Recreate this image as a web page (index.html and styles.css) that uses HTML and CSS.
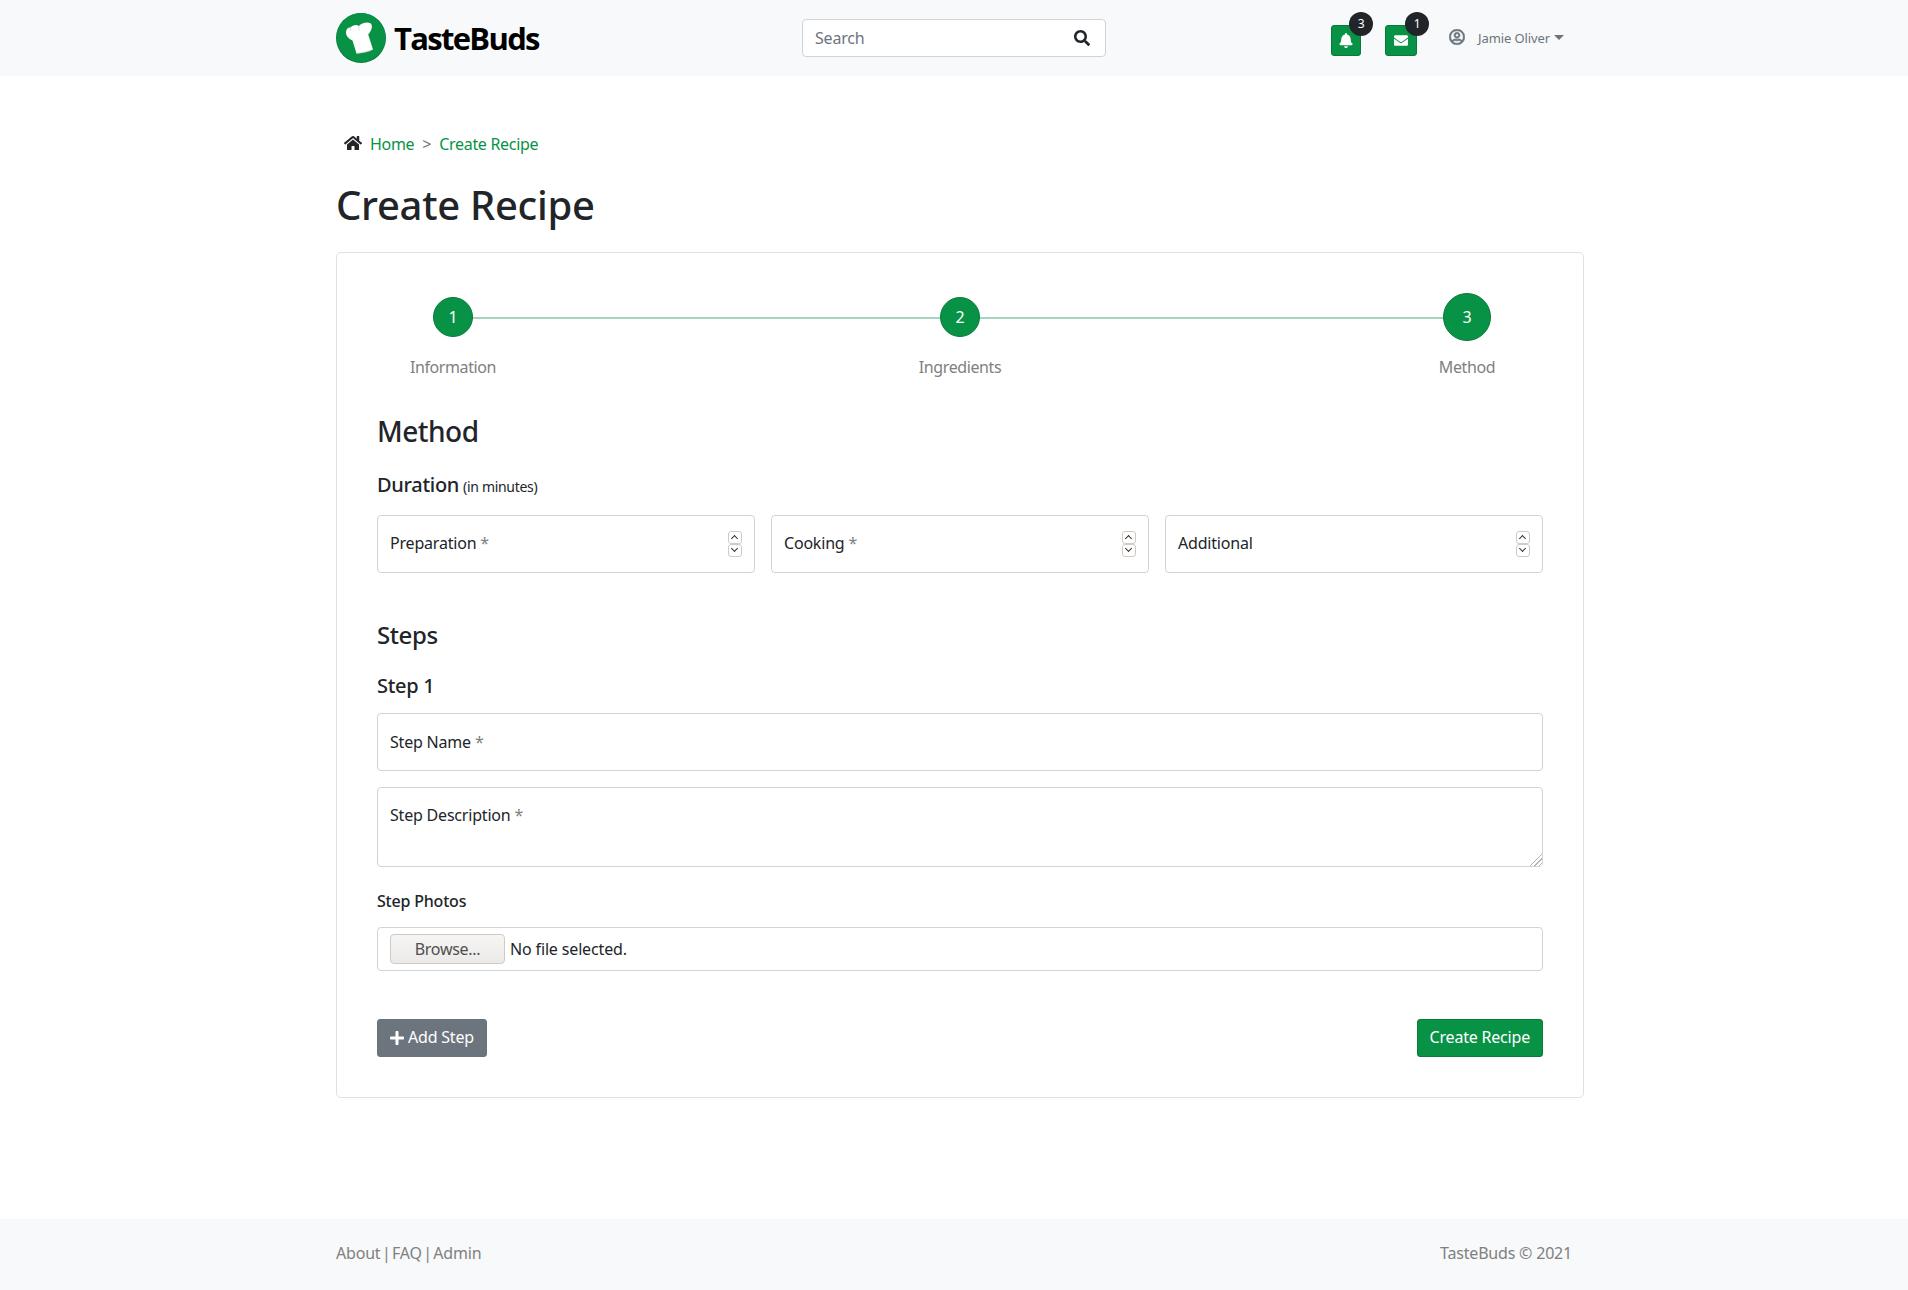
FILE: index.html
```html
<!DOCTYPE html>
<html lang="en">

<head>
    <meta charset="UTF-8">
    <meta name="viewport" content="width=device-width, initial-scale=1.0">
    <title>TasteBuds - Create Recipe</title>
    <link rel="stylesheet" href="styles.css">
</head>

<body>
    <nav class="navbar">
        <a class="brand" href="#">
            <svg class="brand-mark" viewBox="0 0 50 50">
                <circle cx="25" cy="25" r="25" fill="#067a3a" />
                <circle cx="25" cy="24.5" r="24.5" fill="#089246" />
                <path fill="#fff"
                    d="M10 19.500C10 16.500 11.800 14.500 14.500 14.600 16.500 12 20.500 11.300 23 13 25 10 31 8.500 34 10 37 11.800 36.500 16.500 32.200 21.500L37 36.500C32 39 26 40 20.500 40.500L16.500 27.500C12.500 25.500 10 23 10 19.500z" />
                <path fill="none" stroke="#cfcfcf" stroke-width=".8"
                    d="M20.500 40.300C26 39.800 32 38.800 36.800 36.400M23 13c-.5 1.500-.5 3 .5 4.500M14.500 14.600c-.2 1 0 2 .5 3" />
            </svg>
            <span class="brand-name">TasteBuds</span>
        </a>
        <form class="search">
            <input class="search-input" type="text" placeholder="Search">
            <svg class="search-icon" viewBox="0 0 512 512">
                <path
                    d="M505 442.700L405.300 343c-4.500-4.500-10.600-7-17-7H372c27.600-35.300 44-79.700 44-128C416 93.100 322.900 0 208 0S0 93.100 0 208s93.100 208 208 208c48.300 0 92.700-16.400 128-44v16.300c0 6.400 2.500 12.500 7 17l99.700 99.700c9.400 9.400 24.600 9.400 33.900 0l28.300-28.300c9.400-9.400 9.400-24.600.1-34zM208 336c-70.700 0-128-57.200-128-128 0-70.700 57.200-128 128-128 70.700 0 128 57.200 128 128 0 70.700-57.200 128-128 128z" />
            </svg>
        </form>
        <div class="nav-actions">
            <a class="nav-btn nav-btn-bell" href="#">
                <svg class="nav-btn-icon" viewBox="0 0 448 512">
                    <path
                        d="M224 512c35.320 0 63.970-28.650 63.970-64H160.030c0 35.350 28.650 64 63.970 64zm215.390-149.710c-19.320-20.760-55.470-51.990-55.470-154.290 0-77.700-54.480-139.900-127.940-155.160V32c0-17.670-14.320-32-31.980-32s-31.980 14.330-31.980 32v20.840C118.560 68.100 64.080 130.300 64.080 208c0 102.300-36.150 133.530-55.470 154.290-6 6.450-8.660 14.160-8.610 21.710.11 16.400 12.980 32 32.100 32h383.800c19.120 0 32-15.600 32.100-32 .05-7.550-2.610-15.270-8.610-21.710z" />
                </svg>
                <span class="badge">3</span>
            </a>
            <a class="nav-btn nav-btn-mail" href="#">
                <svg class="nav-btn-icon" viewBox="0 0 512 512">
                    <path
                        d="M502.300 190.800c3.900-3.100 9.700-.2 9.700 4.700V400c0 26.500-21.500 48-48 48H48c-26.500 0-48-21.500-48-48V195.600c0-5 5.700-7.800 9.700-4.700 22.400 17.400 52.100 39.500 154.100 113.600 21.100 15.400 56.700 47.800 92.200 47.600 35.700.3 72-32.800 92.300-47.600 102-74.100 131.600-96.300 154-113.700zM256 320c23.200.4 56.600-29.200 73.400-41.400 132.700-96.300 142.800-104.700 173.400-128.700 5.800-4.500 9.200-11.500 9.200-18.900v-19c0-26.500-21.500-48-48-48H48C21.500 64 0 85.500 0 112v19c0 7.400 3.400 14.300 9.200 18.900 30.600 23.900 40.700 32.400 173.400 128.700 16.800 12.200 50.200 41.800 73.400 41.400z" />
                </svg>
                <span class="badge">1</span>
            </a>
            <a class="user" href="#">
                <svg class="user-icon" viewBox="0 0 496 512">
                    <path
                        d="M248 104c-53 0-96 43-96 96s43 96 96 96 96-43 96-96-43-96-96-96zm0 144c-26.500 0-48-21.500-48-48s21.500-48 48-48 48 21.500 48 48-21.500 48-48 48zm0-240C111 8 0 119 0 256s111 248 248 248 248-111 248-248S385 8 248 8zm0 448c-49.700 0-95.100-18.300-130.100-48.400 14.900-23 40.400-38.600 69.600-39.500 20.800 6.400 40.600 9.600 60.500 9.600s39.700-3.100 60.500-9.600c29.200 1 54.700 16.500 69.600 39.500-35 30.100-80.400 48.400-130.100 48.400zm162.700-84.100c-24.400-31.400-62.100-51.900-105.100-51.900-10.200 0-26 9.600-57.600 9.600-31.500 0-47.400-9.600-57.600-9.600-42.900 0-80.600 20.500-105.100 51.900C61.900 339.200 48 299.200 48 256c0-110.300 89.700-200 200-200s200 89.700 200 200c0 43.200-13.900 83.200-37.300 115.900z" />
                </svg>
                <span class="user-name">Jamie Oliver</span>
                <span class="caret"></span>
            </a>
        </div>
    </nav>

    <main class="page">
        <div class="breadcrumb">
            <svg class="home-icon" viewBox="0 0 576 512">
                <path
                    d="M280.370 148.260L96 300.110V464a16 16 0 0 0 16 16l112.060-.29a16 16 0 0 0 15.920-16V368a16 16 0 0 1 16-16h64a16 16 0 0 1 16 16v95.640a16 16 0 0 0 16 16.050L464 480a16 16 0 0 0 16-16V300L295.670 148.260a12.190 12.190 0 0 0-15.300 0zM571.600 251.470L488 182.560V44.050a12 12 0 0 0-12-12h-56a12 12 0 0 0-12 12v72.610L318.470 43a48 48 0 0 0-61 0L4.340 251.470a12 12 0 0 0-1.600 16.900l25.500 31A12 12 0 0 0 45.150 301l235.220-193.740a12.190 12.190 0 0 1 15.300 0L530.900 301a12 12 0 0 0 16.900-1.600l25.500-31a12 12 0 0 0-1.700-16.930z" />
            </svg>
            <a href="#">Home</a>
            <span class="breadcrumb-sep">&gt;</span>
            <a href="#">Create Recipe</a>
        </div>
        <h1 class="page-title">Create Recipe</h1>

        <form class="card">
            <div class="stepper">
                <div class="step">
                    <span class="step-num">1</span>
                    <span class="step-label">Information</span>
                </div>
                <div class="step">
                    <span class="step-num">2</span>
                    <span class="step-label">Ingredients</span>
                </div>
                <div class="step step-active">
                    <span class="step-num">3</span>
                    <span class="step-label">Method</span>
                </div>
            </div>

            <h2 class="section-title">Method</h2>
            <h3 class="duration-title">Duration <small>(in minutes)</small></h3>
            <div class="duration-row">
                <div class="field">
                    <span class="field-label">Preparation <i>*</i></span>
                    <span class="spinner"><b class="spin-up"></b><b class="spin-down"></b></span>
                </div>
                <div class="field">
                    <span class="field-label">Cooking <i>*</i></span>
                    <span class="spinner"><b class="spin-up"></b><b class="spin-down"></b></span>
                </div>
                <div class="field">
                    <span class="field-label">Additional</span>
                    <span class="spinner"><b class="spin-up"></b><b class="spin-down"></b></span>
                </div>
            </div>

            <h3 class="steps-title">Steps</h3>
            <h4 class="step-title">Step 1</h4>
            <div class="field field-name">
                <span class="field-label">Step Name <i>*</i></span>
            </div>
            <div class="field-area">
                <textarea class="area-input"></textarea>
                <span class="area-label">Step Description <i>*</i></span>
                <span class="area-grip"></span>
            </div>
            <label class="photos-label">Step Photos</label>
            <div class="file-input">
                <button class="browse" type="button">Browse...</button>
                <span class="file-name">No file selected.</span>
            </div>

            <div class="form-actions">
                <button class="btn btn-grey" type="button">
                    <svg class="plus-icon" viewBox="0 0 448 512">
                        <path
                            d="M416 208H272V64c0-17.670-14.330-32-32-32h-32c-17.670 0-32 14.330-32 32v144H32c-17.670 0-32 14.330-32 32v32c0 17.670 14.330 32 32 32h144v144c0 17.670 14.330 32 32 32h32c17.670 0 32-14.330 32-32V304h144c17.670 0 32-14.330 32-32v-32c0-17.670-14.330-32-32-32z" />
                    </svg>
                    Add Step
                </button>
                <button class="btn btn-green" type="submit">Create Recipe</button>
            </div>
        </form>
    </main>

    <footer class="footer">
        <div class="footer-links"><a href="#">About</a> | <a href="#">FAQ</a> | <a href="#">Admin</a></div>
        <div>TasteBuds &copy; 2021</div>
    </footer>
</body>

</html>
```

FILE: styles.css
```css
* {
    box-sizing: border-box;
}

body {
    margin: 0;
    font-family: "Noto Sans", sans-serif;
    font-size: 16px;
    line-height: 24px;
    letter-spacing: -0.2px;
    color: #212529;
    background: #fff;
}

a {
    text-decoration: none;
    color: inherit;
}

h1,
h2,
h3,
h4 {
    margin: 0;
    font-weight: 500;
}

.navbar {
    display: flex;
    align-items: center;
    height: 76px;
    padding-left: 336px;
    background: #f8f9fa;
}

.brand {
    display: flex;
    align-items: center;
    width: 466px;
}

.brand-mark {
    width: 50px;
    height: 50px;
}

.brand-name {
    margin-left: 8px;
    font-family: "Open Sans", sans-serif;
    font-size: 31px;
    font-weight: 700;
    letter-spacing: -1.7px;
    color: #000;
}

.search {
    display: flex;
    align-items: center;
    width: 304px;
    height: 38px;
    padding: 0 15px 0 12px;
    background: #fff;
    border: 1px solid #ced4da;
    border-radius: 4px;
}

.search-input {
    flex: 1;
    min-width: 0;
    border: 0;
    outline: 0;
    padding: 0;
    font-family: inherit;
    font-size: 16px;
    letter-spacing: -0.2px;
    color: #212529;
}

.search-input::placeholder {
    color: #6c757d;
}

.search-icon {
    width: 16px;
    height: 16px;
    fill: #212529;
}

.nav-actions {
    display: flex;
    align-items: center;
    margin-left: 225px;
}

.nav-btn {
    position: relative;
    display: flex;
    align-items: center;
    justify-content: center;
    height: 31px;
    margin-top: 5px;
    background: #089246;
    border: 1px solid #087a3b;
    border-radius: 3px;
}

.nav-btn-bell {
    width: 30px;
    margin-right: 24px;
}

.nav-btn-mail {
    width: 32px;
    margin-right: 32px;
}

.nav-btn-icon {
    width: 14px;
    height: 15px;
    fill: #fff;
}

.badge {
    position: absolute;
    top: -14px;
    width: 24px;
    height: 24px;
    border-radius: 50%;
    background: #212529;
    color: #fff;
    font-size: 12px;
    line-height: 24px;
    text-align: center;
}

.nav-btn-bell .badge {
    right: -13px;
}

.nav-btn-mail .badge {
    right: -13px;
}

.user {
    display: flex;
    align-items: center;
    color: #6c757d;
}

.user-icon {
    width: 16px;
    height: 16px;
    margin-top: -2px;
    fill: #6c757d;
    stroke: #6c757d;
    stroke-width: 20;
}

.user-name {
    margin-left: 13px;
    font-size: 13px;
    letter-spacing: -0.1px;
}

.caret {
    width: 0;
    height: 0;
    margin-left: 4px;
    margin-top: -2px;
    border-top: 5px solid #6c757d;
    border-left: 5px solid transparent;
    border-right: 5px solid transparent;
}

.page {
    width: 1248px;
    margin: 56px 0 121px 336px;
}

.breadcrumb {
    display: flex;
    align-items: center;
    padding-left: 8px;
    letter-spacing: -0.3px;
    color: #089246;
}

.home-icon {
    width: 18px;
    height: 16px;
    margin-top: -2px;
    margin-right: 8px;
    fill: #212529;
}

.breadcrumb-sep {
    margin: 0 8px;
    color: #6c757d;
}

.page-title {
    margin-top: 25px;
    font-size: 40px;
    line-height: 48px;
    letter-spacing: -0.3px;
}

.card {
    margin-top: 23px;
    padding: 40px 40px 39.500px;
    border: 1px solid #dee2e6;
    border-radius: 5px;
}

.stepper {
    position: relative;
    display: flex;
    justify-content: space-between;
}

.stepper::before {
    content: "";
    position: absolute;
    left: 76px;
    right: 76px;
    top: 24px;
    height: 2px;
    background: #a5d6bd;
}

.step {
    position: relative;
    display: flex;
    flex-direction: column;
    align-items: center;
    width: 152px;
}

.step-num {
    display: flex;
    align-items: center;
    justify-content: center;
    width: 40px;
    height: 40px;
    margin: 4px 0;
    border-radius: 50%;
    background: #089246;
    border: 1px solid #087a3b;
    color: #fff;
}

.step-active .step-num {
    width: 48px;
    height: 48px;
    margin: 0;
}

.step-label {
    margin-top: 14px;
    letter-spacing: -0.4px;
    color: #808080;
}

.section-title {
    margin-top: 36px;
    padding-bottom: 2px;
    height: 34px;
    font-size: 28px;
    line-height: 32px;
    letter-spacing: -0.5px;
}

.duration-title {
    margin-top: 24px;
    font-size: 20px;
    line-height: 24px;
    letter-spacing: -0.3px;
}

.duration-title small {
    margin-left: -1px;
    font-size: 14px;
    font-weight: 400;
    line-height: 1;
    letter-spacing: -0.3px;
}

.duration-row {
    display: grid;
    grid-template-columns: repeat(3, 1fr);
    gap: 16px;
    margin-top: 18px;
}

.field {
    display: flex;
    align-items: center;
    justify-content: space-between;
    height: 58px;
    padding: 0 12px;
    border: 1px solid #ced4da;
    border-radius: 4px;
}

.duration-row .field-label {
    margin-bottom: 2px;
}

.field-label i,
.area-label i {
    font-style: normal;
    color: #808080;
}

.spinner {
    display: flex;
    flex-direction: column;
}

.spinner b {
    position: relative;
    display: block;
    width: 14px;
    height: 13px;
    background: #fff;
    border: 1px solid #cfcac4;
    border-radius: 3px;
}

.spinner b::after {
    content: "";
    position: absolute;
    left: 3px;
    width: 4px;
    height: 4px;
    border-left: 1.5px solid #333;
    border-top: 1.5px solid #333;
}

.spin-up::after {
    top: 4px;
    transform: rotate(45deg);
}

.spin-down::after {
    top: 1px;
    transform: rotate(225deg);
}

.steps-title {
    margin-top: 48px;
    height: 30px;
    font-size: 24px;
    line-height: 28px;
    letter-spacing: -0.4px;
}

.step-title {
    margin-top: 23px;
    font-size: 20px;
    line-height: 24px;
    letter-spacing: -0.3px;
}

.field-name {
    margin-top: 15px;
}

.field-area {
    position: relative;
    margin-top: 16px;
    height: 80px;
}

.area-input {
    display: block;
    width: 100%;
    height: 80px;
    border: 1px solid #ced4da;
    border-radius: 4px;
    outline: 0;
    resize: none;
}

.area-label {
    position: absolute;
    left: 13px;
    top: 16px;
}

.area-grip {
    position: absolute;
    right: 1px;
    bottom: 1px;
    width: 14px;
    height: 14px;
    background: repeating-linear-gradient(135deg, #fff 0 2px, #b5b5b5 2px 3px);
    clip-path: polygon(100% 0, 100% 100%, 0 100%);
}

.photos-label {
    display: block;
    margin-top: 22px;
    font-weight: 500;
    letter-spacing: -0.2px;
}

.file-input {
    display: flex;
    align-items: center;
    height: 44px;
    margin-top: 14px;
    padding: 0 12px;
    border: 1px solid #ced4da;
    border-radius: 4px;
}

.browse {
    width: 115px;
    height: 30px;
    padding: 0;
    font-family: inherit;
    font-size: 16px;
    letter-spacing: -0.3px;
    color: #4f4f4f;
    background: linear-gradient(#f6f5f4, #eceae8);
    border: 1px solid #cfcac4;
    border-radius: 4px;
}

.file-name {
    margin-left: 5px;
    letter-spacing: -0.15px;
}

.form-actions {
    display: flex;
    justify-content: space-between;
    margin-top: 48px;
}

.btn {
    display: flex;
    align-items: center;
    height: 38px;
    padding: 0 12px 2px;
    font-family: inherit;
    font-size: 16px;
    letter-spacing: -0.2px;
    color: #fff;
    border-radius: 3px;
    border: 1px solid transparent;
}

.btn-grey {
    background: #6c757d;
    border-color: #6c757d;
}

.btn-green {
    background: #089246;
    border-color: #087a3b;
}

.plus-icon {
    width: 14px;
    height: 16px;
    margin-top: 2px;
    margin-right: 4px;
    fill: #fff;
}

.footer {
    display: flex;
    justify-content: space-between;
    align-items: center;
    height: 72px;
    padding: 0 336px 3px;
    background: #f8f9fa;
    color: #808080;
}

.footer-links {
    word-spacing: -2.5px;
}
```
